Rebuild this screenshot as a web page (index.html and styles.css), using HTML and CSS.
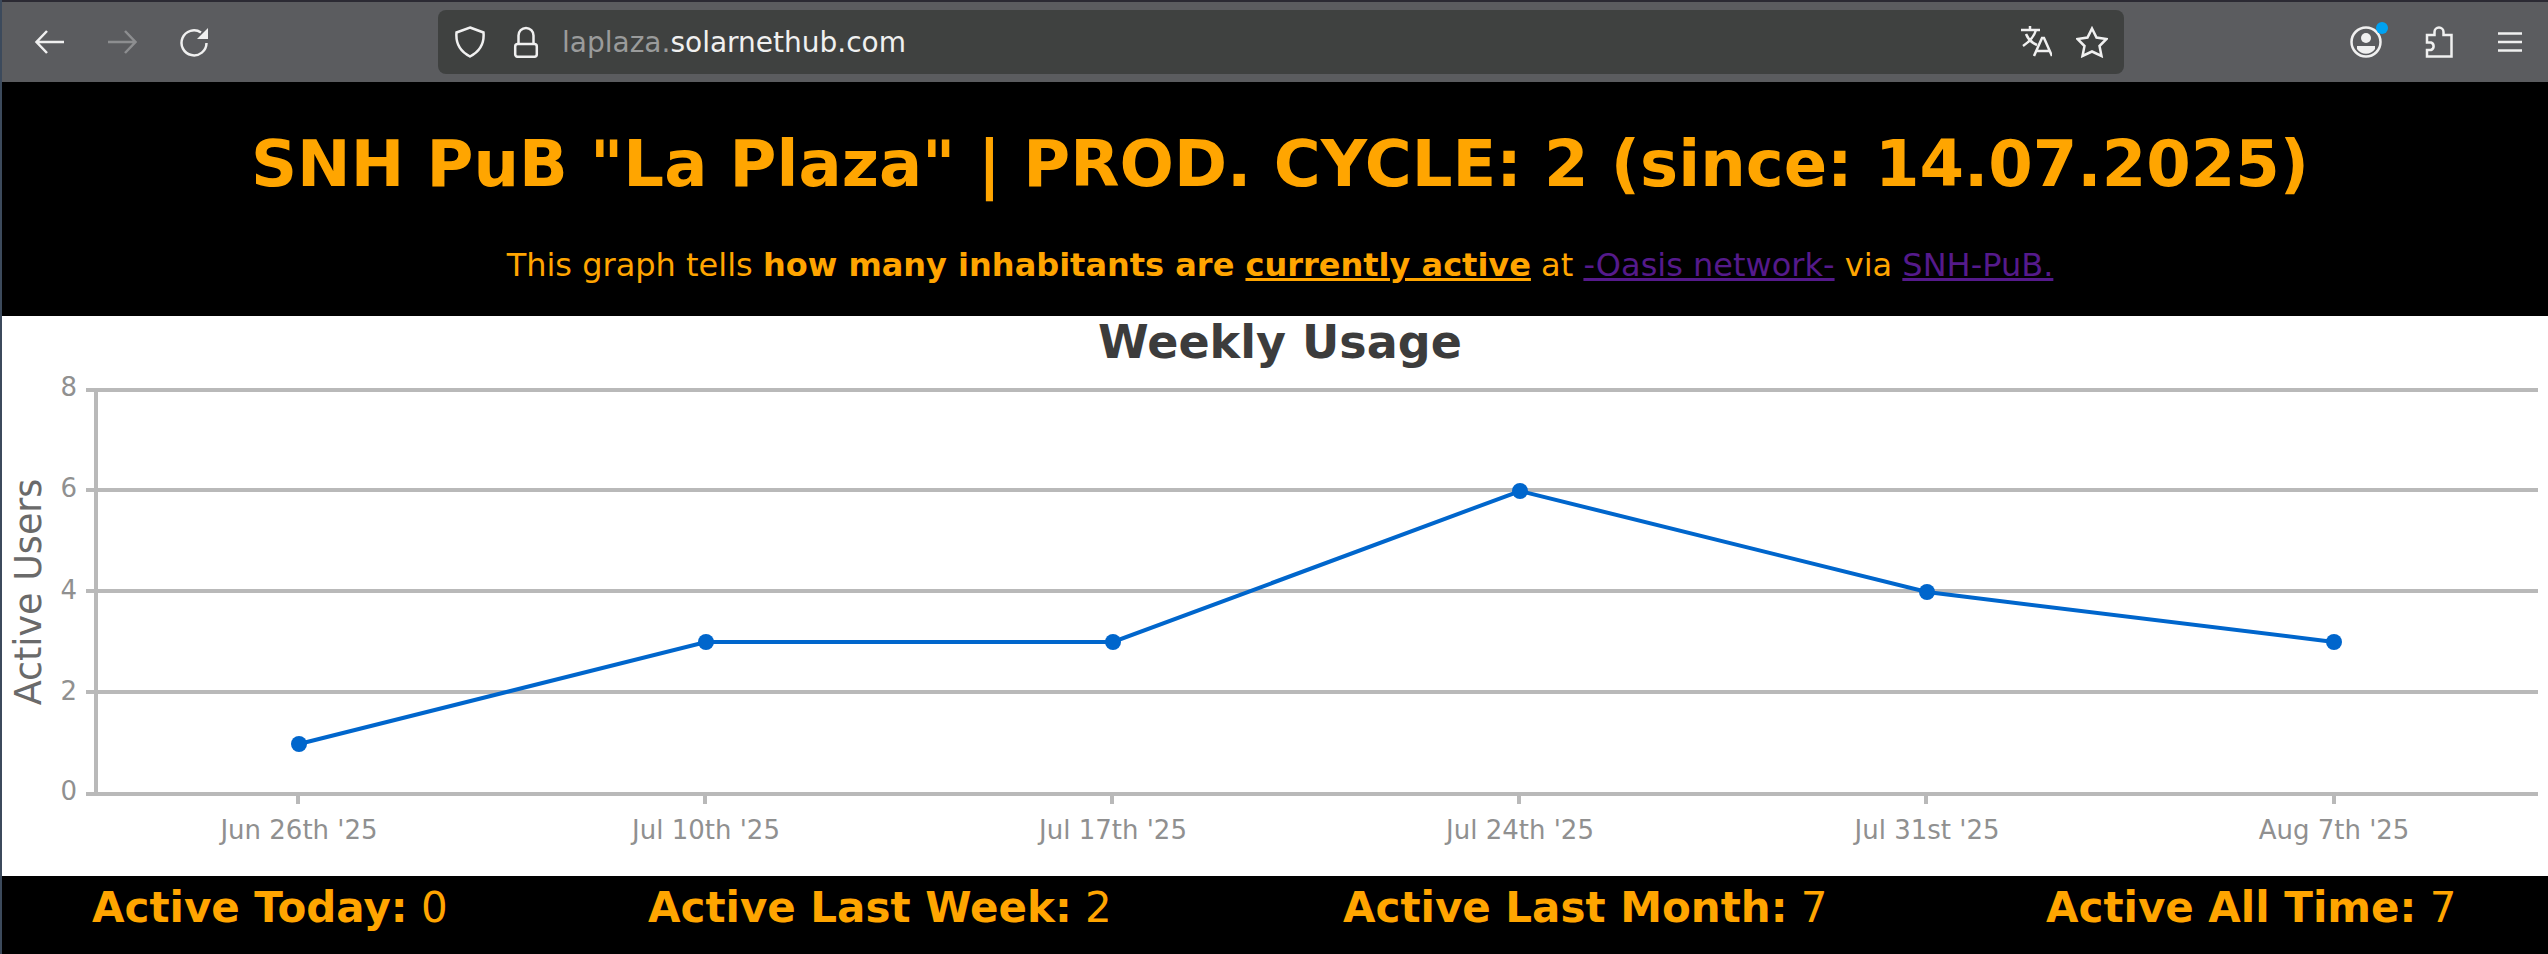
FILE: index.html
```html
<!doctype html>
<html>
    <head>
        <title>SNH PuB "La Plaza"</title>
        <link rel="stylesheet" href="styles.css">
    </head>
    <body>
        <div class="toolbar">
            <div class="nav_buttons">
                <svg class="icon" viewBox="0 0 32 32"><path d="M30 16H3M13 5L2.500 16L13 27"/></svg>
                <svg class="icon dim" viewBox="0 0 32 32"><path d="M2 16H29M19 5L29.500 16L19 27"/></svg>
                <svg class="icon" viewBox="0 0 32 32"><path d="M23 6.500A12.500 12.500 0 1 0 28.500 17"/><path class="solid" d="M30 2V13H19Z"/></svg>
            </div>
            <div class="urlbar">
                <svg class="icon" viewBox="0 0 32 32"><path d="M16 1.500L29.500 6.500C30.500 18 25 26 16 30.500C7 26 1.500 18 2.500 6.500Z"/></svg>
                <svg class="icon lock" viewBox="0 0 32 32"><path d="M8.500 18V9.500A7.500 7.500 0 0 1 23.500 9.500V18"/><rect x="5.200" y="18" width="21.600" height="12.800" rx="2.500"/></svg>
                <span class="url"><span class="url_dim">laplaza.</span>solarnethub.com</span>
                <svg class="icon" viewBox="0 0 32 32"><path d="M1 4H20M10 0V4M16 4C14 11 9 16 3 20M6 8C8 13 12 17 17 19M14 30L22 12H24L32 30M17 25H29"/></svg>
                <svg class="icon star" viewBox="0 0 32 32"><path d="M16 2.500L20.500 11.500L30.500 13L23.500 20L25.500 30L16 25.500L6.500 30L8.500 20L1.500 13L11.500 11.500Z"/></svg>
            </div>
            <div class="right_buttons">
                <div class="account">
                    <svg class="icon" viewBox="0 0 32 32"><circle cx="16" cy="16" r="14.500"/><circle class="solid" cx="16" cy="12" r="5"/><path class="solid" d="M7 20H25V23A11 11 0 0 1 7 23Z"/></svg>
                    <span class="badge"></span>
                </div>
                <svg class="icon" viewBox="0 0 32 32"><path d="M12.500 9V6A4.500 4.500 0 0 1 21.500 6V9H29.500V30.500H5V24H9A4 4 0 0 0 9 16.500H5V9Z"/></svg>
                <svg class="icon" viewBox="0 0 32 32"><path d="M4 7.500H28M4 16H28M4 24.500H28"/></svg>
            </div>
        </div>

        <div class="content">
            <h1>SNH PuB "La Plaza" | PROD. CYCLE: 2 (since: 14.07.2025)</h1>
            <p class="intro">This graph tells <b>how many inhabitants are <u>currently active</u></b> at <a href="#">-Oasis network-</a> via <a href="#">SNH-PuB.</a></p>

            <div class="chart_area">
                <h2>Weekly Usage</h2>
                <svg class="chart" viewBox="0 0 2546 560" width="2546" height="560">
                    <g class="grid">
                        <path d="M84 74H2536M84 174H2536M84 275H2536M84 376H2536M84 478H2536"/>
                        <path d="M94 74V478"/>
                        <path d="M296 478V488M703 478V488M1110 478V488M1517 478V488M1924 478V488M2332 478V488"/>
                    </g>
                    <g class="y_labels">
                        <text x="75" y="80">8</text>
                        <text x="75" y="181">6</text>
                        <text x="75" y="283">4</text>
                        <text x="75" y="384">2</text>
                        <text x="75" y="484">0</text>
                    </g>
                    <text class="y_title" transform="translate(39 276) rotate(-90)">Active Users</text>
                    <polyline class="line" points="297,428 704,326 1111,326 1518,175 1925,276 2332,326"/>
                    <g class="points">
                        <circle cx="297" cy="428" r="8"/>
                        <circle cx="704" cy="326" r="8"/>
                        <circle cx="1111" cy="326" r="8"/>
                        <circle cx="1518" cy="175" r="8"/>
                        <circle cx="1925" cy="276" r="8"/>
                        <circle cx="2332" cy="326" r="8"/>
                    </g>
                    <g class="x_labels">
                        <text x="297" y="523">Jun 26th '25</text>
                        <text x="704" y="523">Jul 10th '25</text>
                        <text x="1111" y="523">Jul 17th '25</text>
                        <text x="1518" y="523">Jul 24th '25</text>
                        <text x="1925" y="523">Jul 31st '25</text>
                        <text x="2332" y="523">Aug 7th '25</text>
                    </g>
                </svg>
            </div>

            <div class="stats">
                <div><b>Active Today:</b> 0</div>
                <div><b>Active Last Week:</b> 2</div>
                <div><b>Active Last Month:</b> 7</div>
                <div><b>Active All Time:</b> 7</div>
            </div>
        </div>
    </body>
</html>
```
FILE: styles.css
```css
html, body {
    padding: 0;
    margin: 0;
    height: 100%;
    overflow: hidden;
}
body {
    background-color: #3c4a5c;
    font-family: "DejaVu Sans", sans-serif;
}
.toolbar {
    display: flex;
    align-items: center;
    height: 80px;
    margin-left: 2px;
    border-top: 2px solid #2b2a33;
    background-color: #5b5c5f;
}
.icon {
    width: 32px;
    height: 32px;
    flex: none;
    fill: none;
    stroke: #f0f0f0;
    stroke-width: 2.500;
}
.icon .solid {
    fill: #f0f0f0;
    stroke: none;
}
.icon.dim {
    stroke: #8d8e90;
}
.nav_buttons {
    display: flex;
    gap: 40px;
    width: 436px;
    padding-left: 32px;
    box-sizing: border-box;
}
.urlbar {
    display: flex;
    align-items: center;
    width: 1686px;
    height: 64px;
    border-radius: 8px;
    background-color: #3f4140;
    padding: 0 16px;
    box-sizing: border-box;
}
.urlbar .lock {
    margin-left: 24px;
}
.url {
    margin-left: 20px;
    flex: 1;
    font-size: 28px;
    color: #f0f0f0;
}
.url_dim {
    color: #9a9b9b;
}
.urlbar .star {
    margin-left: 24px;
}
.right_buttons {
    display: flex;
    gap: 40px;
    margin-left: 226px;
}
.account {
    position: relative;
    height: 32px;
}
.badge {
    position: absolute;
    top: -4px;
    right: -6px;
    width: 12px;
    height: 12px;
    border-radius: 50%;
    background-color: #00a2f2;
}
.content {
    margin-left: 2px;
    height: 872px;
    background-color: black;
    color: orange;
}
h1 {
    margin: 0;
    padding: 45px 0 0 10px;
    font-size: 64px;
    line-height: 74px;
    text-align: center;
}
.intro {
    margin: 0;
    height: 115px;
    padding: 45px 0 0 10px;
    box-sizing: border-box;
    font-size: 32px;
    line-height: 38px;
    text-align: center;
}
.intro a {
    color: #551a8b;
}
.chart_area {
    height: 560px;
    background-color: white;
    position: relative;
}
h2 {
    position: absolute;
    left: 10px;
    right: 0;
    top: -4px;
    margin: 0;
    font-size: 46px;
    line-height: 60px;
    color: #3c3c3c;
    text-align: center;
}
.chart {
    display: block;
}
.grid path {
    fill: none;
    stroke: #b9b9b9;
    stroke-width: 4;
}
.y_labels text {
    font-size: 26px;
    fill: #909090;
    text-anchor: end;
}
.y_title {
    font-size: 36.500px;
    fill: #6a6a6a;
    text-anchor: middle;
}
.x_labels text {
    font-size: 26px;
    fill: #909090;
    text-anchor: middle;
}
.line {
    fill: none;
    stroke: #0066cc;
    stroke-width: 4;
}
.points circle {
    fill: #0066cc;
}
.stats {
    display: grid;
    grid-template-columns: 556px 695px 703px auto;
    padding: 7px 0 0 90px;
    font-size: 42px;
    line-height: 50px;
}
```
